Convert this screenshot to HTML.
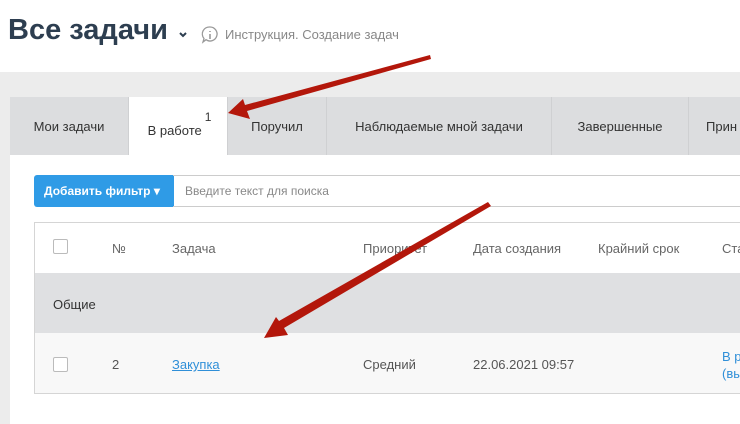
<!DOCTYPE html>
<html><head><meta charset="utf-8"><style>
body{margin:0;width:740px;height:424px;overflow:hidden;background:#fff;font-family:"Liberation Sans",sans-serif;position:relative}
.a{position:absolute}
.tab{position:absolute;top:97px;height:58px;background:#dcdddf;font-size:13px;color:#333;display:flex;align-items:center;justify-content:center;border-right:1px solid #cfd0d2;box-sizing:border-box}
.h{position:absolute;top:241px;font-size:13px;color:#666}
</style></head><body>
<div class="a" style="left:8px;top:14px;font-size:29px;color:#2d3e50;font-weight:bold">Все задачи</div>
<svg class="a" style="left:178px;top:31px" width="10" height="8"><path d="M2 2l3 3 3-3" stroke="#2d3e50" stroke-width="2" fill="none"/></svg>
<svg class="a" style="left:200px;top:25px" width="20" height="20"><path d="M10 2a7 7 0 1 1-4 12.7L3 17l1-3.5A7 7 0 0 1 10 2z" stroke="#999" stroke-width="1.3" fill="none"/><path d="M10 6v1M10 9v5" stroke="#999" stroke-width="1.6"/></svg>
<div class="a" style="left:225px;top:27px;font-size:13px;color:#888">Инструкция. Создание задач</div>
<div class="a" style="left:0;top:72px;width:740px;height:352px;background:#ececec"></div>
<div class="a" style="left:10px;top:155px;width:730px;height:269px;background:#fff"></div>
<div class="tab" style="left:10px;width:119px">Мои задачи</div>
<div class="tab" style="left:129px;width:99px;background:#fff;padding-top:8px">В работе<span style="position:relative;top:-13px;left:3px;font-size:12px">1</span></div>
<div class="tab" style="left:228px;width:99px">Поручил</div>
<div class="tab" style="left:327px;width:225px">Наблюдаемые мной задачи</div>
<div class="tab" style="left:552px;width:137px">Завершенные</div>
<div class="tab" style="left:689px;width:60px;justify-content:flex-start;padding-left:17px">Прин</div>
<div class="a" style="left:34px;top:175px;width:140px;height:32px;background:#2f9be6;border-radius:3px 0 0 3px;color:#fff;font-size:12px;font-weight:bold;line-height:32px;padding-left:10px;box-sizing:border-box">Добавить фильтр ▾</div>
<div class="a" style="left:173px;top:175px;width:580px;height:30px;border:1px solid #ccc;border-left:none;font-size:12px;color:#888;line-height:30px;padding-left:12px">Введите текст для поиска</div>
<div class="a" style="left:34px;top:222px;width:720px;height:172px;border:1px solid #d5d5d5;box-sizing:border-box"></div>
<div class="a" style="left:35px;top:273px;width:705px;height:60px;background:#dfe0e2"></div>
<div class="a" style="left:35px;top:333px;width:705px;height:60px;background:#f8f8f8"></div>
<div class="a" style="left:53px;top:239px;width:13px;height:13px;border:1px solid #bbb;border-radius:2px;background:#fff"></div>
<div class="h" style="left:112px">№</div>
<div class="h" style="left:172px">Задача</div>
<div class="h" style="left:363px">Приоритет</div>
<div class="h" style="left:473px">Дата создания</div>
<div class="h" style="left:598px">Крайний срок</div>
<div class="h" style="left:722px">Ста</div>
<div class="a" style="left:53px;top:297px;font-size:13px;color:#333">Общие</div>
<div class="a" style="left:53px;top:357px;width:13px;height:13px;border:1px solid #bbb;border-radius:2px;background:#fff"></div>
<div class="a" style="left:112px;top:357px;font-size:13px;color:#555">2</div>
<div class="a" style="left:172px;top:357px;font-size:13px;color:#2f8fd8;text-decoration:underline">Закупка</div>
<div class="a" style="left:363px;top:357px;font-size:13px;color:#555">Средний</div>
<div class="a" style="left:473px;top:357px;font-size:13px;color:#555">22.06.2021 09:57</div>
<div class="a" style="left:722px;top:348px;font-size:13px;color:#2f8fd8;line-height:17px">В р<br>(вы</div>
<svg class="a" style="left:0;top:0" width="740" height="424">
<path d="M430 55 L431 59 L247 111 L250 119 L228 113 L243 99 L245 105 Z" fill="#b3170b"/>
<path d="M488 202 L491 206 L284 328 L288 335 L264 338 L276 317 L279 321 Z" fill="#b3170b"/>
</svg>
</body></html>
